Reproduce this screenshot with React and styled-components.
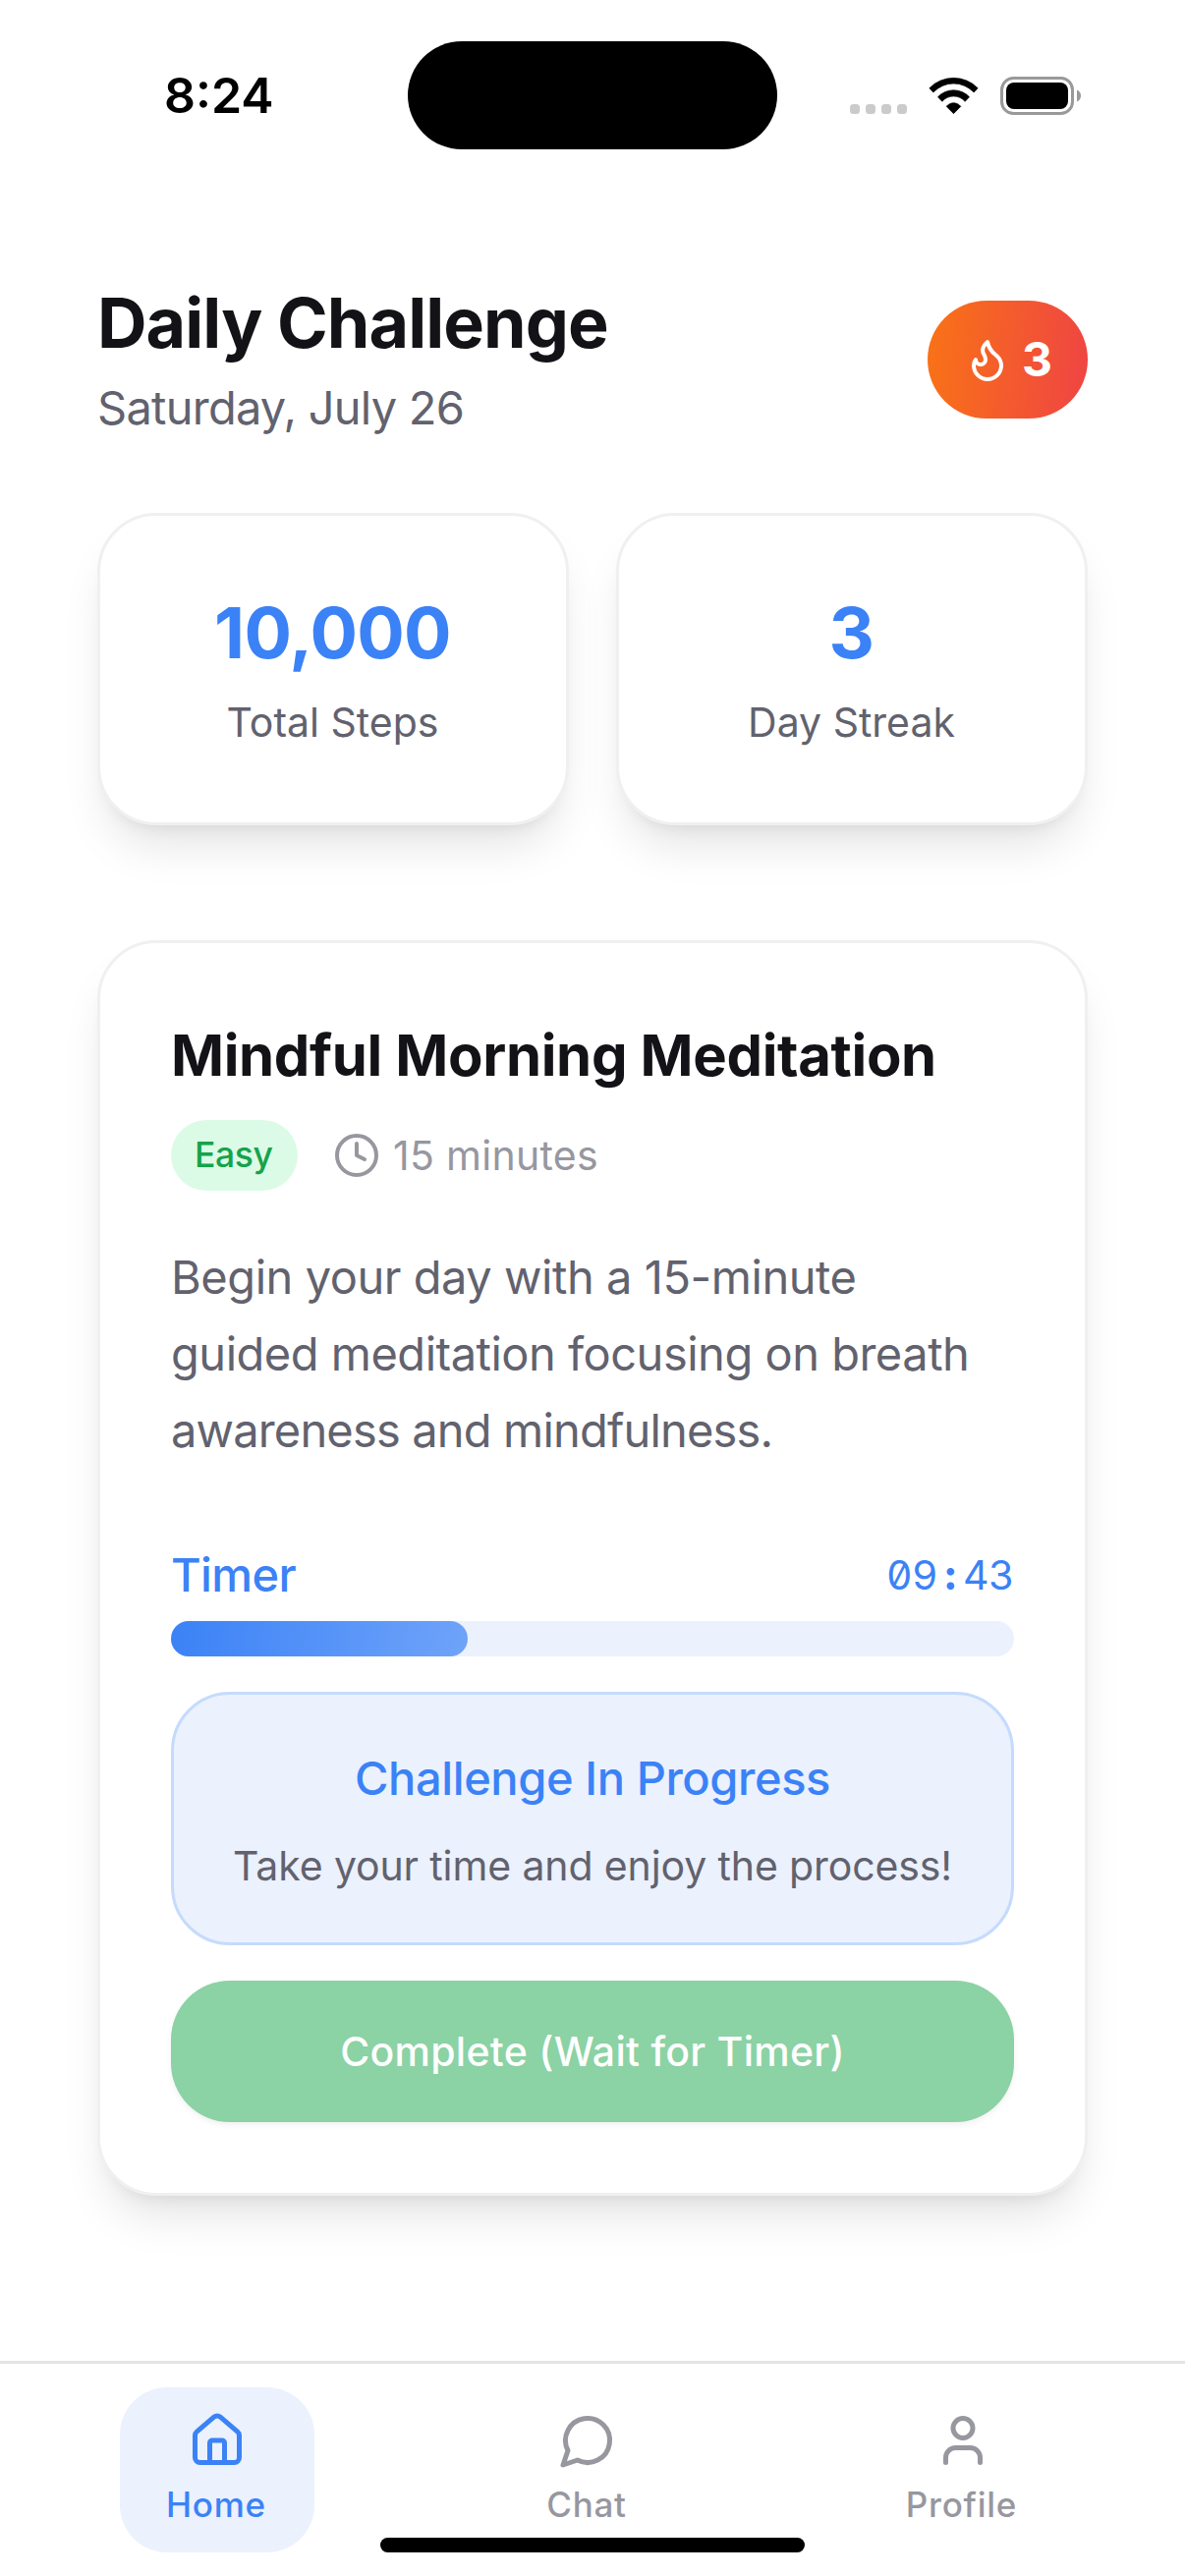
import React from "react";
import styled, { createGlobalStyle } from "styled-components";
import { Clock, House, User } from "lucide-react";

const color = {
  ink: "#131317",
  muted: "#62626e",
  faint: "#97979f",
  blue: "#3b82f6",
  tint: "#ebf1fd",
  tintBorder: "#c5dbfd",
  hairline: "#f0f0f1",
};

const GlobalStyle = createGlobalStyle`
  *, *::before, *::after { box-sizing: border-box; }
  body { margin: 0; background: #fff; }
`;

const Screen = styled.div`
  position: relative;
  display: flex;
  flex-direction: column;
  width: 1206px;
  height: 2622px;
  overflow: hidden;
  background: #fff;
  color: ${color.ink};
  font-family: Inter, "Liberation Sans", sans-serif;
  -webkit-font-smoothing: antialiased;
`;

const Text = styled.div`
  margin: 0;
  font-size: ${(p) => p.$size}px;
  line-height: ${(p) => p.$line}px;
  font-weight: ${(p) => p.$weight || 400};
  letter-spacing: ${(p) => p.$track || 0}px;
  color: ${(p) => p.$color || color.ink};
  white-space: nowrap;
`;

/* Status bar */
const StatusBar = styled.header`
  display: grid;
  grid-template-columns: 415px 376px 1fr;
  align-items: center;
  height: 194px;
`;

const StatusTime = styled(Text)`
  padding-left: 167px;
  color: #000;
`;

const Island = styled.div`
  height: 110px;
  border-radius: 55px;
  background: #000;
`;

const StatusIcons = styled.div`
  display: flex;
  align-items: center;
  gap: 22px;
  padding-left: 74px;
`;

const SignalDots = styled.div`
  display: flex;
  gap: 6px;
  padding-top: 28px;
`;

const SignalDot = styled.i`
  width: 10px;
  height: 10px;
  border-radius: 3.5px;
  background: #cbcbcb;
`;

/* Page content */
const Content = styled.main`
  display: flex;
  flex-direction: column;
  padding: 91px 99px 0;
`;

const PageHeader = styled.section`
  display: flex;
  align-items: center;
  justify-content: space-between;
`;

const Headings = styled.div`
  display: flex;
  flex-direction: column;
  gap: 10px;
`;

const StreakBadge = styled.div`
  display: flex;
  align-items: center;
  gap: 11px;
  width: 163px;
  height: 120px;
  padding-left: 37px;
  border-radius: 60px;
  background: linear-gradient(95deg, #f97316, #ef4444);
`;

const Glyph = styled.svg`
  display: block;
  width: ${(p) => p.$size}px;
  height: ${(p) => p.$size}px;
  fill: none;
  stroke: ${(p) => p.$color || "currentColor"};
  stroke-width: 2;
  stroke-linecap: round;
  stroke-linejoin: round;
`;

const Card = styled.section`
  border: 3px solid ${color.hairline};
  border-radius: 60px;
  background: #fff;
  box-shadow: 0 30px 45px -9px rgba(0, 0, 0, 0.1), 0 12px 18px -12px rgba(0, 0, 0, 0.1);
`;

const Stats = styled.div`
  display: grid;
  grid-template-columns: 1fr 1fr;
  gap: 48px;
  margin-top: 75px;
`;

const StatCard = styled(Card)`
  display: flex;
  flex-direction: column;
  align-items: center;
  gap: 18px;
  height: 318px;
  padding: 75px 1px 0 0;
`;

const ChallengeCard = styled(Card)`
  display: flex;
  flex-direction: column;
  height: 1278px;
  margin-top: 117px;
  padding: 72px;
`;

const MetaRow = styled.div`
  display: flex;
  align-items: center;
  gap: 36px;
  margin-top: 24px;
`;

const Pill = styled.div`
  width: 129px;
  height: 72px;
  padding-left: 24px;
  border-radius: 36px;
  background: #dcfbe7;
`;

const Duration = styled.div`
  display: flex;
  align-items: center;
  gap: 13px;
  color: ${color.faint};
`;

const Description = styled.p`
  display: flex;
  flex-direction: column;
  margin: 49px 0 0;
`;

const TimerRow = styled.div`
  display: flex;
  align-items: center;
  justify-content: space-between;
  margin-top: 72px;
`;

const TimerValue = styled(Text)`
  display: flex;
  font-feature-settings: "tnum", "zero";
`;

const Colon = styled.span`
  width: 26px;
  text-align: center;
  font-weight: 800;
`;

const Track = styled.div`
  height: 36px;
  margin-top: 11px;
  border-radius: 18px;
  background: ${color.tint};
`;

const Fill = styled.div`
  width: ${(p) => p.$percent}%;
  height: 100%;
  border-radius: 18px;
  background: linear-gradient(97deg, ${color.blue}, #6fa3f9);
`;

const Notice = styled.div`
  display: flex;
  flex-direction: column;
  align-items: center;
  gap: 23px;
  height: 258px;
  margin-top: 36px;
  padding-top: 49px;
  border: 3px solid ${color.tintBorder};
  border-radius: 60px;
  background: ${color.tint};
`;

const CompleteButton = styled.button`
  display: flex;
  align-items: center;
  justify-content: center;
  height: 144px;
  margin-top: 36px;
  padding: 0;
  border: 0;
  border-radius: 60px;
  background: #8bd2a4;
  box-shadow: 0 3px 6px rgba(0, 0, 0, 0.06);
  font-family: inherit;
`;

/* Tab bar */
const TabBar = styled.nav`
  display: flex;
  align-items: flex-start;
  justify-content: space-around;
  height: 219px;
  margin-top: auto;
  padding: 24px 28px 0 27px;
  border-top: 3px solid #e4e4e5;
  background: #fff;
`;

const Tab = styled.div`
  display: flex;
  flex-direction: column;
  align-items: center;
  gap: 11px;
  width: ${(p) => p.$width}px;
  height: 168px;
  padding-top: 24px;
  border-radius: 48px;
  background: ${(p) => (p.$active ? color.tint : "transparent")};
  color: ${(p) => (p.$active ? color.blue : color.faint)};
`;

const TabLabel = styled(Text)`
  padding-right: 2px;
`;

const HomeIndicator = styled.div`
  position: absolute;
  left: 387px;
  bottom: 24px;
  width: 432px;
  height: 15px;
  border-radius: 8px;
  background: #000;
`;

const WifiIcon = () => (
  <svg width="51" height="40" viewBox="315.5 51 153 120" fill="#000" stroke="#000" strokeWidth="2" strokeLinejoin="round">
    <path d="M318 89A104 104 0 0 1 466 89L454 102A85 85 0 0 0 330 102Z" />
    <path d="M344 116A66 66 0 0 1 440 116L427 130A46 46 0 0 0 357 130Z" />
    <path d="M370 145A28 28 0 0 1 414 145L392 167Z" />
  </svg>
);

const BatteryIcon = () => (
  <svg width="82" height="40" viewBox="1018 77 82 40" fill="none">
    <rect x="1019.5" y="79.5" width="72" height="36" rx="12" stroke="#999" strokeWidth="3" />
    <rect x="1024" y="84" width="63" height="27" rx="8" fill="#000" />
    <path d="M1096 91.5C1098.5 92.5 1100 94.5 1100 97.5S1098.5 102.5 1096 103.5Z" fill="#999" />
  </svg>
);

const FlameIcon = () => (
  <Glyph $size={48} $color="#fff" viewBox="0 0 24 24">
    <path d="M8.5 14.5A2.5 2.5 0 0 0 11 12c0-1.38-.5-2-1-3-1.072-2.143-.224-4.054 2-6 .5 2.5 2 4.9 4 6.5 2 1.6 3 3.5 3 5.5a7 7 0 1 1-14 0c0-1.153.433-2.294 1-3a2.5 2.5 0 0 0 2.5 2.5z" />
  </Glyph>
);

const ChatIcon = () => (
  <Glyph $size={60} viewBox="0 0 24 24">
    <path d="M7.9 20A9 9 0 1 0 4 16.1L2 22Z" />
  </Glyph>
);

const stats = [
  { value: "10,000", label: "Total Steps" },
  { value: "3", label: "Day Streak" },
];

const description = [
  { text: "Begin your day with a 15-minute", track: -0.45 },
  { text: "guided meditation focusing on breath", track: -0.49 },
  { text: "awareness and mindfulness.", track: -0.83 },
];

const tabs = [
  { label: "Home", width: 198, icon: <House size={60} />, active: true },
  { label: "Chat", width: 176, icon: <ChatIcon /> },
  { label: "Profile", width: 207, icon: <User size={60} /> },
];

export default function App() {
  return (
    <Screen>
      <GlobalStyle />
      <StatusBar>
        <StatusTime $size={50} $line={60} $weight={600} $track={0}>8:24</StatusTime>
        <Island />
        <StatusIcons>
          <SignalDots>
            <SignalDot />
            <SignalDot />
            <SignalDot />
            <SignalDot />
          </SignalDots>
          <WifiIcon />
          <BatteryIcon />
        </StatusIcons>
      </StatusBar>

      <Content>
        <PageHeader>
          <Headings>
            <Text as="h1" $size={70} $line={87} $weight={700} $track={-0.93}>Daily Challenge</Text>
            <Text $size={47} $line={65} $track={-0.75} $color={color.muted}>Saturday, July 26</Text>
          </Headings>
          <StreakBadge>
            <FlameIcon />
            <Text $size={48} $line={60} $weight={700} $color="#fff">3</Text>
          </StreakBadge>
        </PageHeader>

        <Stats>
          {stats.map((s) => (
            <StatCard key={s.label}>
              <Text $size={72} $line={87} $weight={700} $track={-0.7} $color={color.blue}>{s.value}</Text>
              <Text $size={41} $line={60} $color={color.muted}>{s.label}</Text>
            </StatCard>
          ))}
        </Stats>

        <ChallengeCard>
          <Text as="h2" $size={58} $line={84} $weight={700} $track={-0.34}>Mindful Morning Meditation</Text>
          <MetaRow>
            <Pill>
              <Text $size={35.5} $line={71} $weight={500} $track={-0.4} $color="#16a34a">Easy</Text>
            </Pill>
            <Duration>
              <Clock size={48} />
              <Text $size={41} $line={60} $track={0.29} $color={color.faint}>15 minutes</Text>
            </Duration>
          </MetaRow>
          <Description>
            {description.map((d) => (
              <Text as="span" key={d.text} $size={47} $line={78} $track={d.track} $color={color.muted}>{d.text}</Text>
            ))}
          </Description>
          <TimerRow>
            <Text $size={47} $line={72} $weight={500} $track={-0.6} $color={color.blue}>Timer</Text>
            <TimerValue $size={41} $line={70} $track={-0.6} $color={color.blue}>
              <span>09</span>
              <Colon>:</Colon>
              <span>43</span>
            </TimerValue>
          </TimerRow>
          <Track>
            <Fill $percent={35.2} />
          </Track>
          <Notice>
            <Text $size={47} $line={72} $weight={500} $track={-0.4} $color={color.blue}>Challenge In Progress</Text>
            <Text $size={41} $line={60} $track={-0.12} $color={color.muted}>Take your time and enjoy the process!</Text>
          </Notice>
          <CompleteButton>
            <Text as="span" $size={41} $line={60} $weight={500} $track={0.28} $color="#fff">Complete (Wait for Timer)</Text>
          </CompleteButton>
        </ChallengeCard>
      </Content>

      <TabBar>
        {tabs.map((t) => (
          <Tab key={t.label} $width={t.width} $active={t.active}>
            {t.icon}
            <TabLabel as="span" $size={35} $line={48} $weight={500} $track={0.75} $color="inherit">{t.label}</TabLabel>
          </Tab>
        ))}
      </TabBar>
      <HomeIndicator />
    </Screen>
  );
}
